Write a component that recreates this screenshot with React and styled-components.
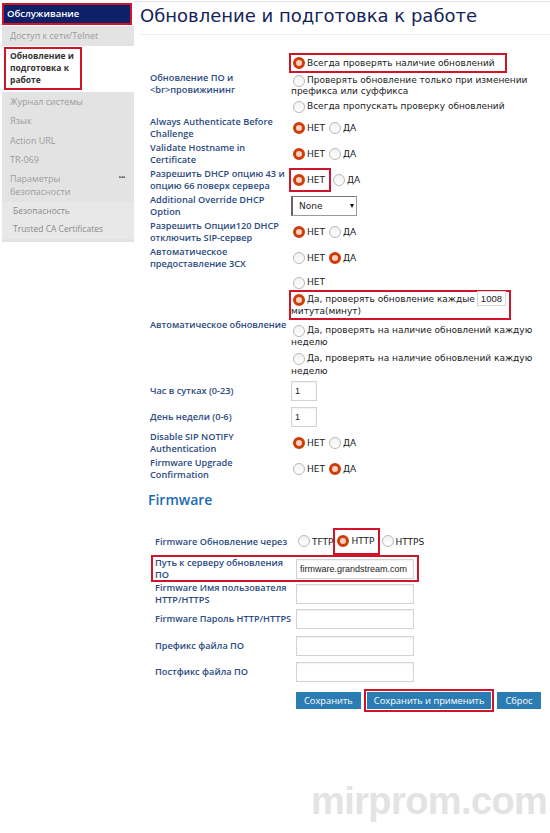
import React from "react";
import styled, { createGlobalStyle } from "styled-components";

const GlobalStyle = createGlobalStyle`
  html, body {
    margin: 0;
    padding: 0;
    background: #fff;
  }
  body {
    width: 550px;
    height: 833px;
    overflow: hidden;
    position: relative;
    font-family: "Open Sans", "Liberation Sans", sans-serif;
  }
`;

const sideItems = ["Журнал системы", "Язык", "Action URL", "TR-069"];

function Radio({ on }) {
  return <RadioDot $on={on} />;
}

function YesNo({ yes, boxNo }) {
  const no = (
    <>
      <Radio on={!yes} />
      <Opt>НЕТ</Opt>
    </>
  );
  return (
    <Inline>
      {boxNo ? <Marked $pad="4px 2px 4px 0">{no}</Marked> : no}
      <Radio on={yes} />
      <Opt>ДА</Opt>
    </Inline>
  );
}

function App() {
  return (
    <>
      <GlobalStyle />
      <Page>
        <Sidebar>
          <SideHeader>Обслуживание</SideHeader>
          <SideItem>Доступ к сети/Telnet</SideItem>
          <SideActive>
            <ActiveBox>Обновление и подготовка к работе</ActiveBox>
          </SideActive>
          <SideGroup>
            {sideItems.map((item, index) => (
              <SideItem key={index}>{item}</SideItem>
            ))}
            <SideItem $more>
              Параметры безопасности
              <Dots>•••</Dots>
            </SideItem>
            <SideSub>Безопасность</SideSub>
            <SideSub>Trusted CA Certificates</SideSub>
          </SideGroup>
        </Sidebar>

        <Main>
          <Title>Обновление и подготовка к работе</Title>
          <Form>
            <Row>
              <Label>Обновление ПО и {"<br>"}провижининг</Label>
              <Stack>
                <Marked $pad="2px 8px 2px 0">
                  <Radio on />
                  <Opt>Всегда проверять наличие обновлений</Opt>
                </Marked>
                <Choice>
                  <Radio />
                  <Opt>Проверять обновление только при изменении префикса или суффикса</Opt>
                </Choice>
                <Choice>
                  <Radio />
                  <Opt>Всегда пропускать проверку обновлений</Opt>
                </Choice>
              </Stack>
            </Row>
            <Row>
              <Label>Always Authenticate Before Challenge</Label>
              <YesNo />
            </Row>
            <Row>
              <Label>Validate Hostname in Certificate</Label>
              <YesNo />
            </Row>
            <Row>
              <Label>Разрешить DHCP опцию 43 и опцию 66 поверх сервера</Label>
              <YesNo boxNo />
            </Row>
            <Row>
              <Label>Additional Override DHCP Option</Label>
              <Select>
                None
                <Arrow />
              </Select>
            </Row>
            <Row>
              <Label>Разрешить Опции120 DHCP отключить SIP-сервер</Label>
              <YesNo />
            </Row>
            <Row>
              <Label>Автоматическое предоставление 3CX</Label>
              <YesNo yes />
            </Row>
            <Row>
              <Label>Автоматическое обновление</Label>
              <Stack $top={4}>
                <Choice>
                  <Radio />
                  <Opt>НЕТ</Opt>
                </Choice>
                <Marked $pad="1px 3px 1px 0" $block>
                  <Radio on />
                  <Opt>Да, проверять обновление каждые</Opt>
                  <SmallInput>1008</SmallInput>
                  <br />
                  <Opt>митута(минут)</Opt>
                </Marked>
                <Choice $gap>
                  <Radio />
                  <Opt>Да, проверять на наличие обновлений каждую неделю</Opt>
                </Choice>
                <Choice $gap>
                  <Radio />
                  <Opt>Да, проверять на наличие обновлений каждую неделю</Opt>
                </Choice>
              </Stack>
            </Row>
            <Row>
              <Label>Час в сутках (0-23)</Label>
              <Field $w={26}>1</Field>
            </Row>
            <Row>
              <Label>День недели (0-6)</Label>
              <Field $w={26}>1</Field>
            </Row>
            <Row>
              <Label>Disable SIP NOTIFY Authentication</Label>
              <YesNo />
            </Row>
            <Row>
              <Label>Firmware Upgrade Confirmation</Label>
              <YesNo yes />
            </Row>
          </Form>

          <Section>Firmware</Section>
          <Form $indent>
            <Row $h={25}>
              <Label>Firmware Обновление через</Label>
              <Inline>
                <Radio />
                <Opt>TFTP</Opt>
                <Marked $pad="5px 1px 6px 0">
                  <Radio on />
                  <Opt>HTTP</Opt>
                </Marked>
                <Radio />
                <Opt>HTTPS</Opt>
              </Inline>
            </Row>
            <BoxRow>
              <Label $tight>Путь к серверу обновления ПО</Label>
              <Field $w={118}>firmware.grandstream.com</Field>
            </BoxRow>
            <Row $h={23}>
              <Label>Firmware Имя пользователя HTTP/HTTPS</Label>
              <Field $w={118} />
            </Row>
            <Row>
              <Label>Firmware Пароль HTTP/HTTPS</Label>
              <Field $w={118} />
            </Row>
            <Row $h={27}>
              <Label>Префикс файла ПО</Label>
              <Field $w={118} />
            </Row>
            <Row>
              <Label>Постфикс файла ПО</Label>
              <Field $w={118} />
            </Row>
            <Buttons>
              <Button>Сохранить</Button>
              <ButtonBox>
                <Button $wide>Сохранить и применить</Button>
              </ButtonBox>
              <Button>Сброс</Button>
            </Buttons>
          </Form>
        </Main>
      </Page>
      <Watermark>mirprom.com</Watermark>
    </>
  );
}

const Page = styled.div`
  display: flex;
  align-items: flex-start;
`;

const Sidebar = styled.div`
  width: 132px;
  margin: 3px 0 0 2px;
  display: flex;
  flex-direction: column;
  gap: 1px;
`;

const SideHeader = styled.div`
  height: 18px;
  line-height: 18px;
  padding: 0 3px;
  background: #0d2068;
  border: 2px solid #d0142a;
  color: #fff;
  font-size: 9.5px;
  font-weight: 600;
  width: 120px;
`;

const SideItem = styled.div`
  position: relative;
  background: #e3e3e3;
  color: #9c9c9c;
  font-size: 9px;
  line-height: ${(p) => (p.$more ? "13px" : "19.5px")};
  padding: ${(p) => (p.$more ? "2px 30px 4px 8px" : "0 8px")};
`;

const Dots = styled.span`
  position: absolute;
  right: 9px;
  top: 1px;
  font-size: 7px;
  letter-spacing: -0.5px;
  color: #444;
`;

const SideActive = styled.div`
  background: #fff;
  padding: 0 0 1px 2px;
`;

const ActiveBox = styled.div`
  width: 66px;
  border: 2px solid #d0142a;
  padding: 1px 4px 2px 4px;
  font-size: 8.5px;
  font-weight: 700;
  line-height: 12px;
  color: #333;
`;

const SideGroup = styled.div`
  background: #e3e3e3;
  display: flex;
  flex-direction: column;
  padding-bottom: 3px;
`;

const SideSub = styled.div`
  background: #e8e8e8;
  color: #8a8a8a;
  font-size: 8.5px;
  line-height: 18.5px;
  padding: 0 11px;
`;

const Main = styled.div`
  flex: 1;
  padding-left: 6px;
  border-top: 1px solid #e4e4e4;
  margin-top: 1px;
`;

const Title = styled.h1`
  margin: 0;
  padding: 3px 0 7px;
  font-family: "DejaVu Sans", sans-serif;
  font-weight: normal;
  font-size: 18px;
  line-height: 22px;
  color: #14245a;
  border-bottom: 1px solid #f3f0ea;
`;

const Form = styled.div`
  display: flex;
  flex-direction: column;
  margin-top: ${(p) => (p.$indent ? "19px" : "17px")};
  padding-left: ${(p) => (p.$indent ? "15px" : "10px")};
`;

const Row = styled.div`
  display: grid;
  grid-template-columns: 141px 1fr;
  align-items: center;
  min-height: ${(p) => p.$h || 26}px;
`;

const BoxRow = styled(Row)`
  width: 262px;
  margin-left: -4px;
  padding-left: 2px;
  border: 2px solid #d0142a;
  min-height: 23px;
`;

const Label = styled.div`
  font-size: 9.2px;
  font-weight: 600;
  line-height: ${(p) => (p.$tight ? "11.5px" : "12px")};
  color: #2c4b80;
`;

const Stack = styled.div`
  display: flex;
  flex-direction: column;
  align-items: flex-start;
  padding: ${(p) => p.$top || 1}px 0 1px;
`;

const Inline = styled.div`
  display: flex;
  align-items: center;
`;

const Choice = styled.div`
  font-family: "DejaVu Sans", sans-serif;
  font-size: 9px;
  line-height: ${(p) => (p.$gap ? "12.5px" : "11px")};
  padding: ${(p) => (p.$gap ? "3.5px 0 0" : "2px 0")};
  color: #222;
  max-width: 245px;
`;

const Marked = styled.div`
  display: ${(p) => (p.$block ? "block" : "inline-flex")};
  align-items: center;
  border: 2px solid #d0142a;
  padding: ${(p) => p.$pad};
  margin-left: -2px;
  font-family: "DejaVu Sans", sans-serif;
  font-size: 9px;
  line-height: 12px;
  color: #222;
`;

const Opt = styled.span`
  font-family: "DejaVu Sans", sans-serif;
  font-size: 9px;
  color: #1a1a1a;
  margin-right: 2px;
`;

const RadioDot = styled.span`
  display: inline-block;
  box-sizing: border-box;
  width: 12px;
  height: 12px;
  border-radius: 50%;
  vertical-align: -2px;
  margin: -3px 2px -2px 2px;
  border: ${(p) => (p.$on ? "3.5px solid #cf3c0b" : "1px solid #b8b8b8")};
  background: ${(p) => (p.$on ? "#fbd2bf" : "linear-gradient(#f2f2f2, #fff)")};
`;

const SmallInput = styled.span`
  display: inline-block;
  box-sizing: border-box;
  width: 29px;
  height: 15px;
  line-height: 13px;
  margin: -2px 0 -1px;
  border: 1px solid #d6d6d6;
  padding-left: 3px;
  overflow: hidden;
  vertical-align: -3px;
  font-family: "Liberation Sans", sans-serif;
  font-size: 9.5px;
  color: #222;
  white-space: nowrap;
`;

const Field = styled.div`
  box-sizing: border-box;
  width: ${(p) => p.$w}px;
  height: 20px;
  line-height: 18px;
  border: 1px solid #d3d3d3;
  box-shadow: inset 0 1px 2px rgba(0, 0, 0, 0.06);
  padding-left: 3px;
  font-family: "Liberation Sans", sans-serif;
  font-size: 9px;
  color: #222;
`;

const Select = styled.div`
  position: relative;
  box-sizing: border-box;
  width: 66px;
  height: 20px;
  line-height: 18px;
  border: 1px solid #999;
  border-top-color: #777;
  border-left: 2px solid #666;
  padding-left: 6px;
  font-family: "DejaVu Sans", sans-serif;
  font-size: 9px;
  color: #222;
`;

const Arrow = styled.span`
  position: absolute;
  right: 2px;
  top: 7px;
  width: 0;
  height: 0;
  border-left: 2px solid transparent;
  border-right: 2px solid transparent;
  border-top: 4px solid #111;
`;

const Section = styled.h2`
  margin: 9px 0 0 8px;
  font-size: 14px;
  font-weight: 600;
  line-height: 18px;
  color: #1b6cb2;
`;

const Buttons = styled.div`
  display: flex;
  align-items: center;
  gap: 3px;
  margin: 4px 0 0 141px;
`;

const Button = styled.div`
  height: 17px;
  line-height: 17px;
  padding: 0 ${(p) => (p.$wide ? "7px" : "8px")};
  background: #2b7cb3;
  color: #fff;
  font-size: 9.3px;
  font-weight: 500;
`;

const ButtonBox = styled.div`
  border: 2px solid #d0142a;
  padding: 1px;
`;

const Watermark = styled.div`
  position: absolute;
  left: 311px;
  top: 780px;
  font-family: "Liberation Sans", sans-serif;
  font-weight: 700;
  font-size: 38px;
  letter-spacing: -0.6px;
  color: #e3e3e3;
`;

export default App;
